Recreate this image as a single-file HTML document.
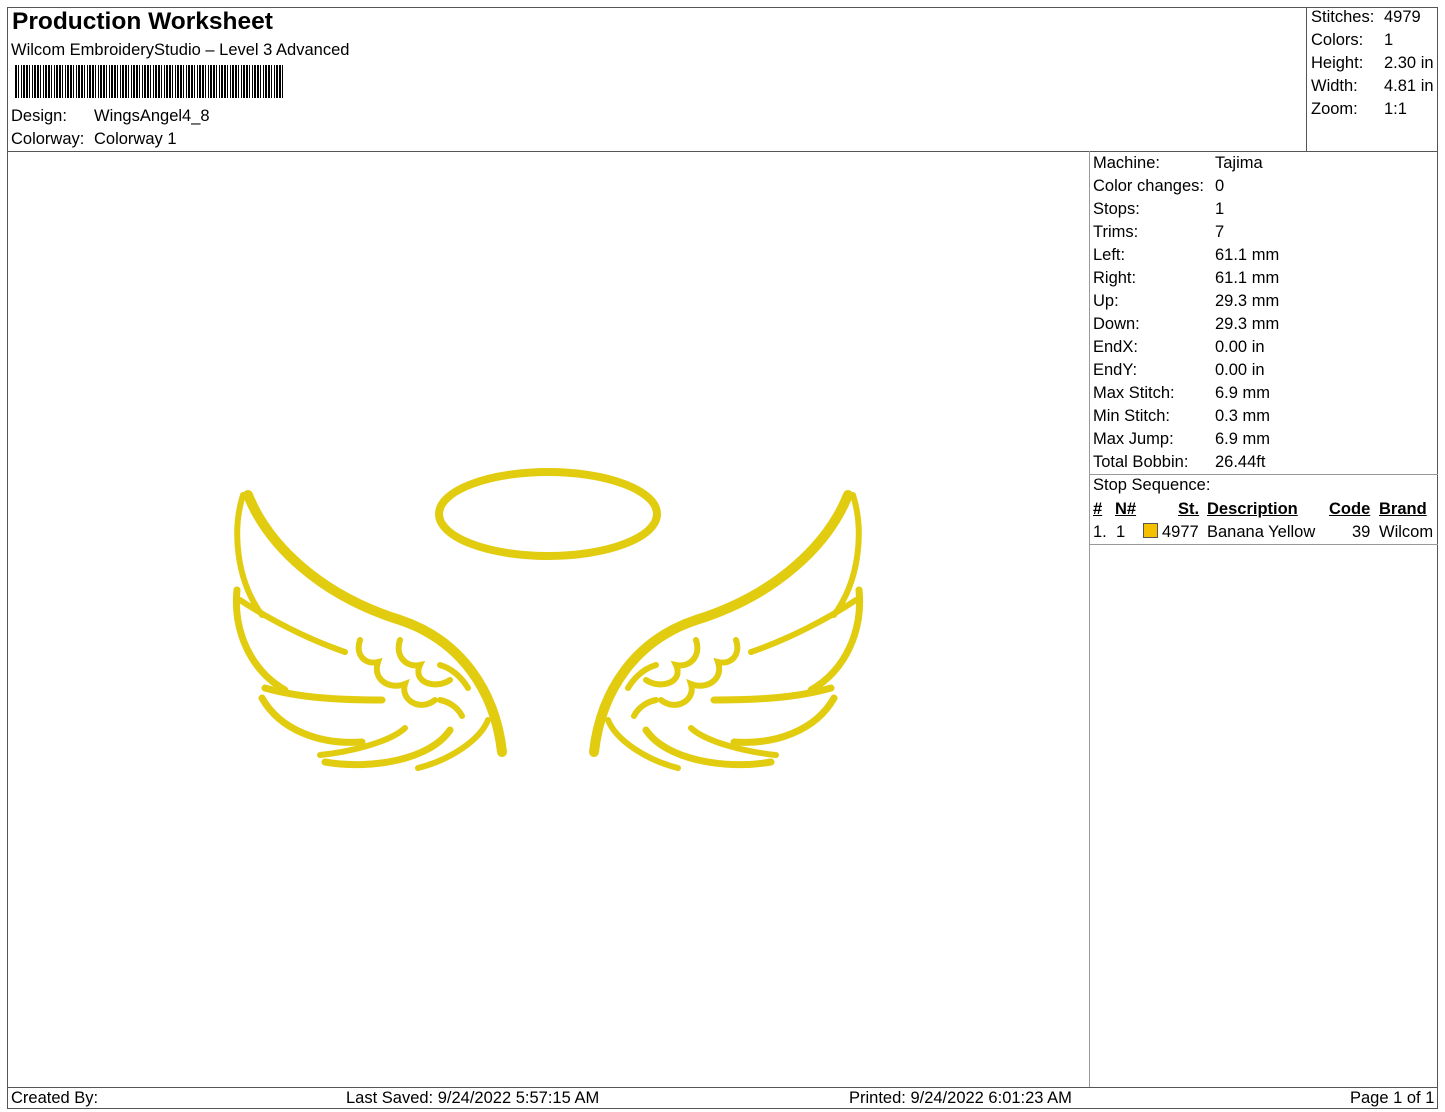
<!DOCTYPE html>
<html><head><meta charset="utf-8"><style>
body{margin:0;background:#fff;font-family:"Liberation Sans",Arial,sans-serif;color:#000}
.p{position:relative;width:1445px;height:1112px;overflow:hidden}
.a{position:absolute;font-size:16.5px;white-space:nowrap}
.l{position:absolute;background:#555}
u{text-decoration:underline}
</style></head><body><div class="p">
<div class="l" style="left:7px;top:7px;width:1431px;height:1px"></div>
<div class="l" style="left:7px;top:1108px;width:1431px;height:1px"></div>
<div class="l" style="left:7px;top:7px;width:1px;height:1101px"></div>
<div class="l" style="left:1437px;top:7px;width:1px;height:1101px"></div>
<div class="l" style="left:7px;top:151px;width:1431px;height:1px"></div>
<div class="l" style="left:1306px;top:7px;width:1px;height:144px"></div>
<div class="l" style="left:1089px;top:151px;width:1px;height:936px;background:#999"></div>
<div class="l" style="left:7px;top:1087px;width:1431px;height:1px"></div>
<div class="l" style="left:1089px;top:474px;width:349px;height:1px;background:#999"></div>
<div class="l" style="left:1089px;top:544px;width:349px;height:1px;background:#999"></div>

<div class="a" style="left:12px;top:8px;font-size:24.5px;font-weight:bold">Production Worksheet</div>
<div class="a" style="left:11px;top:41px">Wilcom EmbroideryStudio – Level 3 Advanced</div>
<div style="position:absolute;left:15px;top:65px;width:270px;height:33px;background:repeating-linear-gradient(90deg,#000 0 2px,#fff 2px 3px,#000 3px 4px,#fff 4px 6px,#000 6px 7px,#fff 7px 8px,#000 8px 10px,#fff 10px 11px)"></div>
<div class="a" style="left:11px;top:107px">Design:</div><div class="a" style="left:94px;top:107px">WingsAngel4_8</div>
<div class="a" style="left:11px;top:130px">Colorway:</div><div class="a" style="left:94px;top:130px">Colorway 1</div>

<div class="a" style="left:1311px;top:8px">Stitches:</div><div class="a" style="left:1384px;top:8px">4979</div>
<div class="a" style="left:1311px;top:31px">Colors:</div><div class="a" style="left:1384px;top:31px">1</div>
<div class="a" style="left:1311px;top:54px">Height:</div><div class="a" style="left:1384px;top:54px">2.30 in</div>
<div class="a" style="left:1311px;top:77px">Width:</div><div class="a" style="left:1384px;top:77px">4.81 in</div>
<div class="a" style="left:1311px;top:100px">Zoom:</div><div class="a" style="left:1384px;top:100px">1:1</div>

<div class="a" style="left:1093px;top:152px;line-height:23px">Machine:<br>Color changes:<br>Stops:<br>Trims:<br>Left:<br>Right:<br>Up:<br>Down:<br>EndX:<br>EndY:<br>Max Stitch:<br>Min Stitch:<br>Max Jump:<br>Total Bobbin:<br>Stop Sequence:</div>
<div class="a" style="left:1215px;top:152px;line-height:23px">Tajima<br>0<br>1<br>7<br>61.1 mm<br>61.1 mm<br>29.3 mm<br>29.3 mm<br>0.00 in<br>0.00 in<br>6.9 mm<br>0.3 mm<br>6.9 mm<br>26.44ft</div>
<div class="a" style="left:1093px;top:500px;font-weight:bold"><u>#</u></div>
<div class="a" style="left:1115px;top:500px;font-weight:bold"><u>N#</u></div>
<div class="a" style="left:1178px;top:500px;font-weight:bold"><u>St.</u></div>
<div class="a" style="left:1207px;top:500px;font-weight:bold"><u>Description</u></div>
<div class="a" style="left:1329px;top:500px;font-weight:bold"><u>Code</u></div>
<div class="a" style="left:1379px;top:500px;font-weight:bold"><u>Brand</u></div>
<div class="a" style="left:1093px;top:523px">1.</div>
<div class="a" style="left:1116px;top:523px">1</div>
<div style="position:absolute;left:1143px;top:523px;width:13px;height:13px;background:#f5c000;border:1px solid #555"></div>
<div class="a" style="left:1162px;top:523px">4977</div>
<div class="a" style="left:1207px;top:523px">Banana Yellow</div>
<div class="a" style="left:1352px;top:523px">39</div>
<div class="a" style="left:1379px;top:523px">Wilcom</div>

<div class="a" style="left:11px;top:1089px">Created By:</div>
<div class="a" style="left:346px;top:1089px">Last Saved: 9/24/2022 5:57:15 AM</div>
<div class="a" style="left:849px;top:1089px">Printed: 9/24/2022 6:01:23 AM</div>
<div class="a" style="left:1350px;top:1089px">Page 1 of 1</div>

<svg style="position:absolute;left:0;top:0" width="1445" height="1112" fill="none" stroke-linecap="round">
<defs><g id="w" stroke="#e2cc10">
<path d="M248 495 C268 545 320 595 400 620 C460 640 495 690 502 752" stroke-width="10"/>
<path d="M243 495 C232 530 236 580 262 615" stroke-width="6"/>
<path d="M237 590 C233 630 250 670 285 690" stroke-width="7"/>
<path d="M240 600 C270 620 310 640 345 652" stroke-width="6"/>
<path d="M265 688 C300 698 340 700 382 700" stroke-width="7"/>
<path d="M262 698 C280 730 320 745 362 742" stroke-width="7"/>
<path d="M320 755 C350 752 390 742 405 728" stroke-width="6"/>
<path d="M325 762 C370 770 430 760 450 730" stroke-width="7"/>
<path d="M418 768 C450 760 480 740 488 720" stroke-width="6"/>
<path d="M360 640 C355 655 365 665 378 662 C372 680 390 690 405 684 C400 700 420 712 435 700" stroke-width="6"/>
<path d="M400 640 C395 655 405 668 420 665 C412 682 435 690 450 680" stroke-width="6"/>
<path d="M440 665 C450 668 460 675 468 688" stroke-width="6"/>
<path d="M440 700 C450 702 458 708 462 716" stroke-width="6"/>
</g></defs>
<use href="#w"/>
<use href="#w" transform="translate(1096,0) scale(-1,1)"/>
<ellipse cx="548" cy="514" rx="109" ry="42" stroke="#e2cc10" stroke-width="8"/>
</svg>
</div></body></html>
